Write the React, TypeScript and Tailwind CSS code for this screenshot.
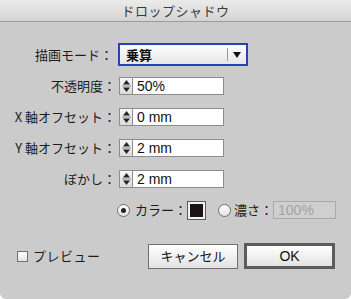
import { useState } from 'react';

const jp = '"Noto Sans CJK JP", "Liberation Sans", sans-serif';
const latin = '"Liberation Sans", "Noto Sans CJK JP", sans-serif';

function Stepper() {
    return (
        <div className="flex h-[18px] w-[14px] flex-col items-center justify-center border border-[#8c8c8c] bg-gradient-to-b from-[#f7f7f7] to-[#dcdcdc]">
            <svg width="9" height="14" viewBox="0 0 9 14">
                <path d="M4.5 1 L8 5.5 L1 5.5 Z" fill="#222" />
                <line x1="0" y1="7" x2="9" y2="7" stroke="#8c8c8c" strokeWidth="1" />
                <path d="M1 8.5 L8 8.5 L4.5 13 Z" fill="#222" />
            </svg>
        </div>
    );
}

function Row({ label, value, className }: { label: string; value: string; className?: string }) {
    return (
        <div className={`flex h-[18px] items-center ${className ?? ''}`}>
            <div className="w-[119px] pr-[3px] text-right text-[13px] text-[#1c1c1c]" style={{ fontFamily: jp }}>
                {label}
            </div>
            <Stepper />
            <div
                className="flex h-[18px] w-[91px] items-center border border-l-0 border-[#8c8c8c] bg-white pl-[4px] text-[14px] text-[#111]"
                style={{ fontFamily: latin }}
            >
                {value}
            </div>
        </div>
    );
}

function Radio({ checked }: { checked?: boolean }) {
    return (
        <div className="flex h-[13px] w-[13px] items-center justify-center rounded-full border border-[#6f6f6f] bg-gradient-to-b from-[#ffffff] to-[#e2e2e2]">
            {checked && <div className="h-[5px] w-[5px] rounded-full bg-[#222]" />}
        </div>
    );
}

export default function App() {
    const [preview, setPreview] = useState(false);

    return (
        <div className="h-[299px] w-[351px] overflow-hidden rounded-b-[6px] bg-[#cbcbcb]" style={{ fontFamily: jp }}>
            <div className="flex h-[22px] items-center justify-center border-b border-[#9c9c9c] bg-gradient-to-b from-[#ebebeb] to-[#d4d4d4] text-[13px] tracking-[0.5px] text-[#3b3b3b]">
                ドロップシャドウ
            </div>

            <div className="mt-[21px] flex h-[23px] items-center">
                <div className="w-[118px] pr-[5px] text-right text-[13px] text-[#1c1c1c]">描画モード：</div>
                <div className="flex h-[23px] w-[130px] items-center border-2 border-[#2b3fb6] bg-gradient-to-b from-[#fdfdfd] to-[#e6e6e6]">
                    <span className="flex-1 pl-[6px] text-[13px] font-bold text-[#111]">乗算</span>
                    <div className="h-[13px] w-px bg-[#9a9a9a]" />
                    <svg className="mx-[5px]" width="8" height="6" viewBox="0 0 8 6">
                        <path d="M0 0 L8 0 L4 6 Z" fill="#111" />
                    </svg>
                </div>
            </div>

            <Row className="mt-[11px]" label="不透明度：" value="50%" />
            <Row className="mt-[13px]" label="X 軸オフセット：" value="0 mm" />
            <Row className="mt-[13px]" label="Y 軸オフセット：" value="2 mm" />
            <Row className="mt-[13px]" label="ぼかし：" value="2 mm" />

            <div className="mt-[13px] flex h-[18px] items-center pl-[117px] text-[13px] text-[#1c1c1c]">
                <Radio checked />
                <span className="ml-[5px]">カラー：</span>
                <div className="flex h-[19px] w-[19px] items-center justify-center border border-[#5a5a5a] bg-[#f2f2f2]">
                    <div className="h-[13px] w-[13px] bg-[#1a1414]" />
                </div>
                <div className="ml-[12px]">
                    <Radio />
                </div>
                <span className="ml-[3px]">濃さ：</span>
                <div
                    className="flex h-[18px] w-[63px] items-center border border-[#a9a9a9] bg-[#cfcfcf] pl-[4px] text-[14px] text-[#a3a3a3]"
                    style={{ fontFamily: latin }}
                >
                    100%
                </div>
            </div>

            <div className="mt-[24px] flex items-center pl-[17px]">
                <button
                    type="button"
                    onClick={() => setPreview(!preview)}
                    className="flex w-[131px] items-center text-[13px] text-[#1c1c1c]"
                >
                    <div className="h-[11px] w-[11px] border border-[#6f6f6f] bg-gradient-to-b from-[#ffffff] to-[#e4e4e4]" />
                    <span className="ml-[5px] tracking-[0.5px]">プレビュー</span>
                </button>
                <button
                    type="button"
                    className="h-[25px] w-[90px] border border-[#6e6e6e] bg-gradient-to-b from-[#ffffff] to-[#e3e3e3] text-[13px] text-[#111]"
                >
                    キャンセル
                </button>
                <button
                    type="button"
                    className="ml-[6px] h-[26px] w-[91px] border-[3px] border-[#5c5c5c] bg-gradient-to-b from-[#ffffff] to-[#e3e3e3] text-[14px] text-[#111]"
                    style={{ fontFamily: latin }}
                >
                    OK
                </button>
            </div>
        </div>
    );
}
